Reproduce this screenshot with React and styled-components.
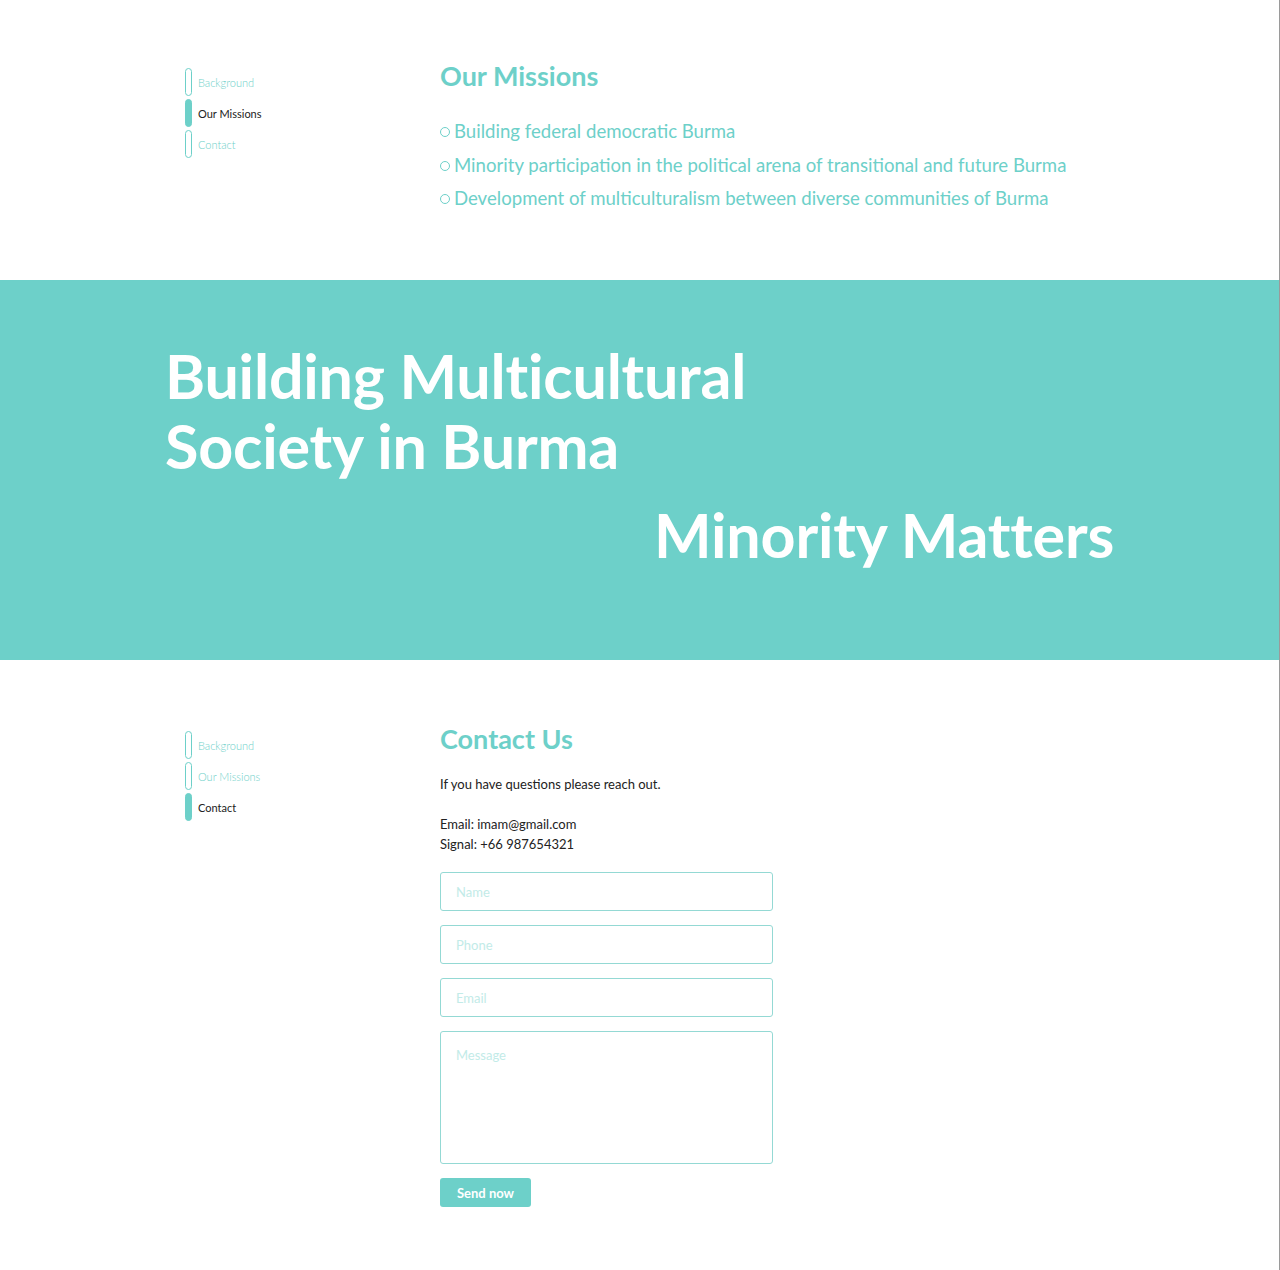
import React from 'react'
import styled, { createGlobalStyle } from 'styled-components'

const teal = '#6dd0c9'

const GlobalStyle = createGlobalStyle`
  * { box-sizing: border-box; margin: 0; padding: 0; }
  body {
    margin: 0;
    font-family: Lato, "Liberation Sans", sans-serif;
    background: #fff;
    color: #222;
  }
`

const Page = styled.div`
  width: 1280px;
  border-right: 1px solid #9a9a9a;
`

const Section = styled.section`
  display: grid;
  grid-template-columns: 255px 1fr;
  padding: ${p => p.$pad || '62px 0 0 185px'};
  height: ${p => p.$height};
`

const SideNav = styled.ul`
  list-style: none;
  display: flex;
  flex-direction: column;
  gap: 3px;
  padding-top: 7px;
`

const NavItem = styled.li`
  display: flex;
  align-items: center;
  gap: 6px;
  font-size: 11px;
  color: ${p => (p.$active ? '#222' : teal)};
  font-weight: ${p => (p.$active ? 400 : 300)};
`

const Pill = styled.span`
  display: block;
  width: 7px;
  height: 28px;
  border-radius: 4px;
  border: 1px solid ${teal};
  background: ${p => (p.$active ? teal : 'transparent')};
`

const Content = styled.div`
  display: flex;
  flex-direction: column;
`

const Heading = styled.h2`
  font-size: 27px;
  font-weight: 700;
  color: ${teal};
  line-height: 30px;
`

const MissionList = styled.ul`
  list-style: none;
  margin-top: 28px;
  display: flex;
  flex-direction: column;
  gap: 9px;
`

const MissionItem = styled.li`
  display: flex;
  align-items: center;
  gap: 4px;
  font-size: 18.6px;
  font-weight: 400;
  color: ${teal};
  line-height: 24.5px;
`

const Ring = styled.span`
  display: inline-block;
  width: 10px;
  height: 10px;
  border-radius: 50%;
  border: 1.2px solid ${teal};
  margin-top: 2px;
`

const Banner = styled.section`
  background: ${teal};
  height: 380px;
  padding: 61px 165px 0 165px;
  color: #fff;
  display: flex;
  flex-direction: column;
`

const BannerTitle = styled.h1`
  font-size: 61px;
  font-weight: 700;
  line-height: 70px;
  letter-spacing: -0.2px;
`

const BannerTag = styled.p`
  font-size: 61px;
  font-weight: 700;
  line-height: 70px;
  text-align: right;
  margin-top: 19px;
  letter-spacing: -0.2px;
`

const Lead = styled.p`
  font-size: 13px;
  color: #222;
  margin-top: 20px;
  line-height: 20px;
`

const Details = styled.p`
  font-size: 13px;
  color: #222;
  margin-top: 20px;
  line-height: 20px;
`

const Form = styled.form`
  display: flex;
  flex-direction: column;
  gap: 14px;
  width: 333px;
  margin-top: 18px;
`

const Field = styled.input`
  height: 39px;
  border: 1px solid #94d9d4;
  border-radius: 3px;
  padding: 0 15px;
  font-family: Lato, "Liberation Sans", sans-serif;
  font-size: 13px;
  outline: none;
  &::placeholder { color: #c2ebe8; }
`

const Area = styled.textarea`
  height: 133px;
  border: 1px solid #94d9d4;
  border-radius: 3px;
  padding: 15px 15px;
  font-family: Lato, "Liberation Sans", sans-serif;
  font-size: 13px;
  resize: none;
  outline: none;
  &::placeholder { color: #c2ebe8; }
`

const SendButton = styled.button`
  width: 91px;
  height: 29px;
  border: none;
  border-radius: 3px;
  background: ${teal};
  color: #fff;
  font-family: Lato, "Liberation Sans", sans-serif;
  font-size: 13px;
  font-weight: 700;
`

const Nav = ({ active }) => (
  <SideNav>
    {['Background', 'Our Missions', 'Contact'].map(label => (
      <NavItem key={label} $active={label === active}>
        <Pill $active={label === active} />
        {label}
      </NavItem>
    ))}
  </SideNav>
)

const missions = [
  'Building federal democratic Burma',
  'Minority participation in the political arena of transitional and future Burma',
  'Development of multiculturalism between diverse communities of Burma',
]

export default function App() {
  return (
    <Page>
      <GlobalStyle />
      <Section $height="280px" $pad="61px 0 0 185px">
        <Nav active="Our Missions" />
        <Content>
          <Heading>Our Missions</Heading>
          <MissionList>
            {missions.map(m => (
              <MissionItem key={m}>
                <Ring />
                {m}
              </MissionItem>
            ))}
          </MissionList>
        </Content>
      </Section>
      <Banner>
        <BannerTitle>
          Building Multicultural
          <br />
          Society in Burma
        </BannerTitle>
        <BannerTag>Minority Matters</BannerTag>
      </Banner>
      <Section $height="610px" $pad="64px 0 0 185px">
        <Nav active="Contact" />
        <Content>
          <Heading>Contact Us</Heading>
          <Lead>If you have questions please reach out.</Lead>
          <Details>
            Email: imam@gmail.com
            <br />
            Signal: +66 987654321
          </Details>
          <Form onSubmit={e => e.preventDefault()}>
            <Field placeholder="Name" />
            <Field placeholder="Phone" />
            <Field placeholder="Email" />
            <Area placeholder="Message" />
            <SendButton type="submit">Send now</SendButton>
          </Form>
        </Content>
      </Section>
    </Page>
  )
}
